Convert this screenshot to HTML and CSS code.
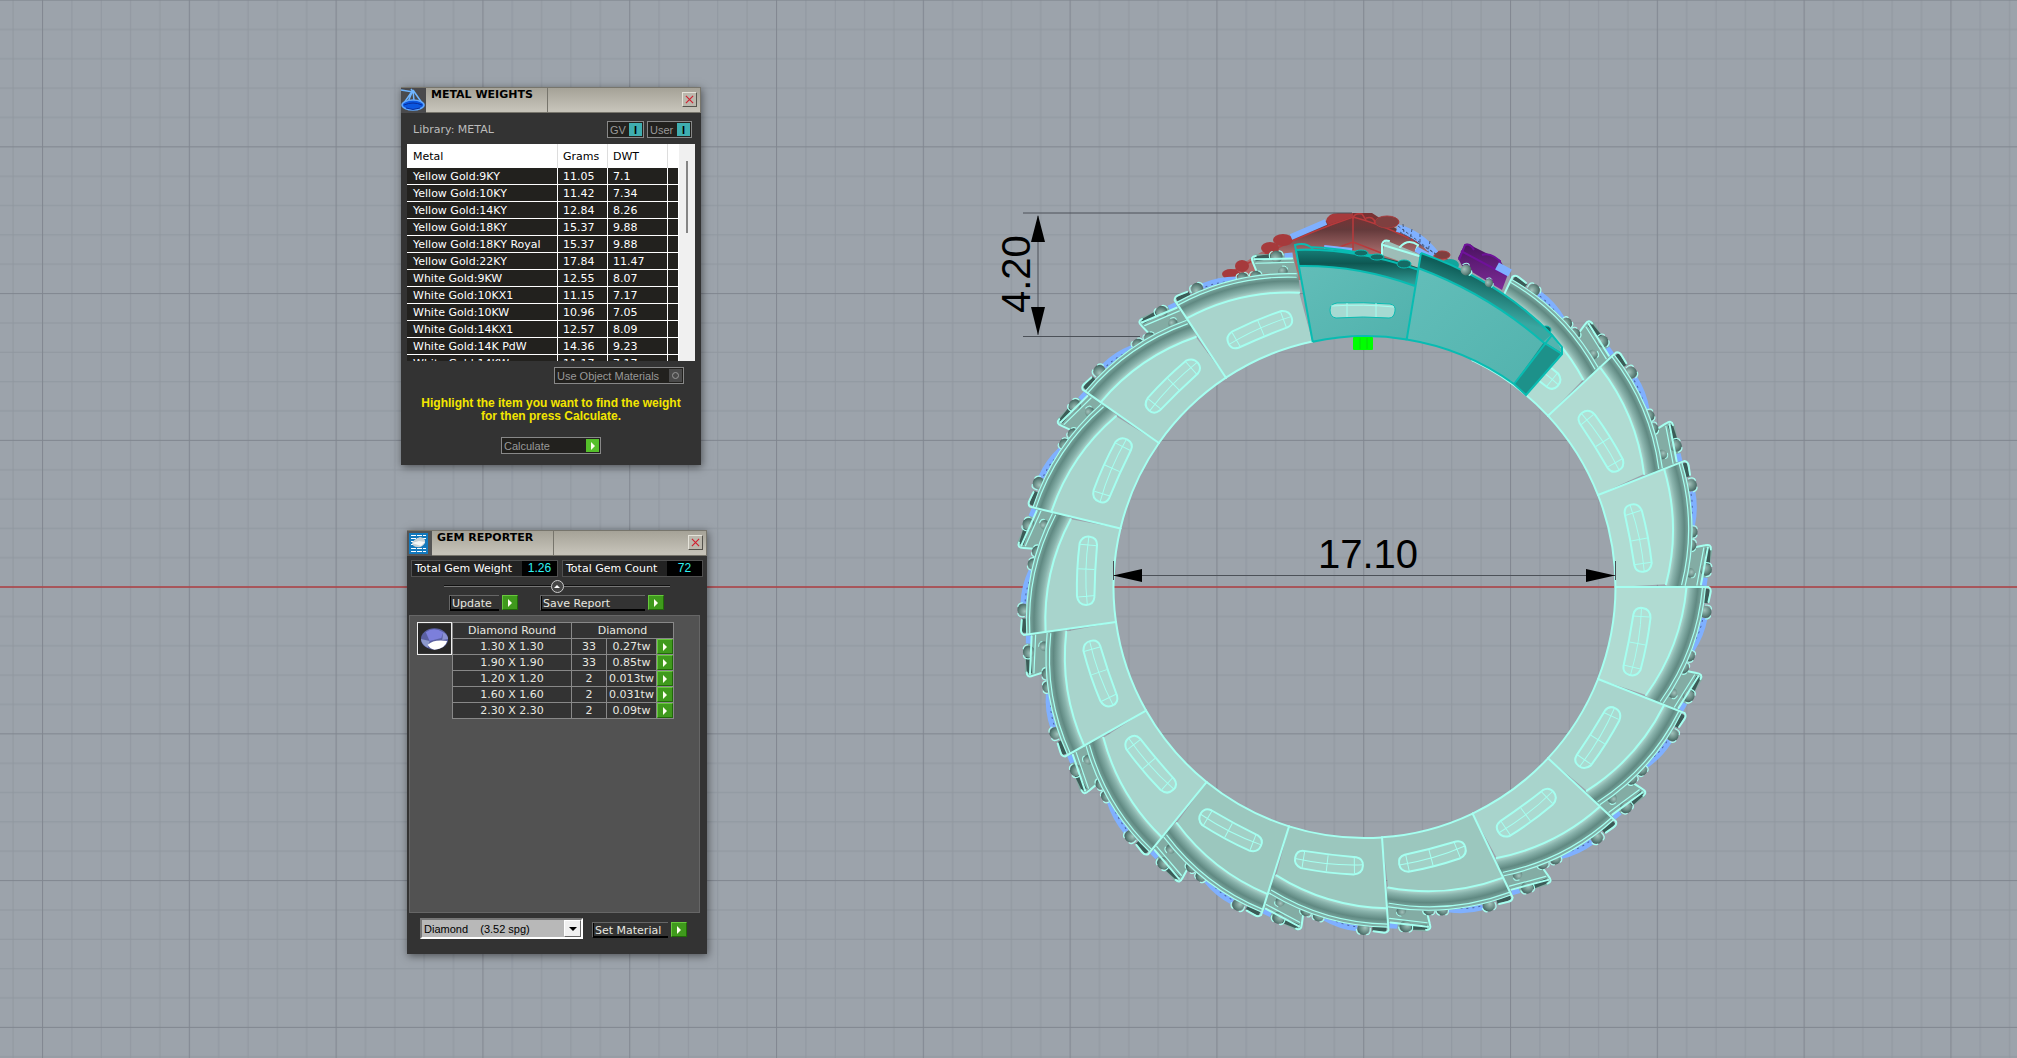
FILE: index.html
```html
<!DOCTYPE html>
<html lang="en">
<head>
    <meta charset="UTF-8">
    <meta name="viewport" content="width=device-width, initial-scale=1.0">
    <title>Ring Viewport</title>
    <link rel="stylesheet" href="styles.css">
</head>
<body>
    <main class="viewport">
        <svg class="scene" viewBox="0 0 2017 1058" preserveAspectRatio="xMinYMin slice">
            <defs>
                <pattern id="grid" x="42" y="-0.4" width="146.8" height="146.75" patternUnits="userSpaceOnUse">
                    <path class="grid-minor" d="M29.9 0V147M59.2 0V147M88.6 0V147M117.9 0V147M0 29.9H147M0 59.2H147M0 88.6H147M0 117.9H147"/>
                    <path class="grid-major" d="M.6 0V147M0 .6H147"/>
                </pattern>
                <radialGradient id="flange" gradientUnits="userSpaceOnUse" cx="106.7" cy="-19" r="237">
                    <stop offset=".911" stop-color="#b4dad2"/>
                    <stop offset=".93" stop-color="#8bb5ae"/>
                    <stop offset=".96" stop-color="#608982"/>
                    <stop offset=".985" stop-color="#82aea6"/>
                </radialGradient>
                <radialGradient id="beadFill" cx=".4" cy=".35" r=".7">
                    <stop offset="0" stop-color="#a3c2bc"/>
                    <stop offset=".6" stop-color="#688c85"/>
                    <stop offset="1" stop-color="#3f605b"/>
                </radialGradient>
                <linearGradient id="redFill" x1="0" y1="0" x2="0" y2="1">
                    <stop offset="0" stop-color="#7c3133"/>
                    <stop offset=".25" stop-color="#643a3b"/>
                    <stop offset=".6" stop-color="#a86c6c"/>
                    <stop offset="1" stop-color="#b86a6a"/>
                </linearGradient>
                <linearGradient id="tealTop" x1="0" y1="0" x2="0" y2="1">
                    <stop offset="0" stop-color="#16807a"/>
                    <stop offset=".4" stop-color="#0e5752"/>
                    <stop offset="1" stop-color="#37a59f"/>
                </linearGradient>
                <linearGradient id="tealSlope" x1=".6" y1=".3" x2=".45" y2=".65">
                    <stop offset="0" stop-color="#0f5f5a"/>
                    <stop offset="1" stop-color="#3aa7a1"/>
                </linearGradient>
                <linearGradient id="tealBody" x1="0" y1="0" x2="1" y2="1">
                    <stop offset="0" stop-color="#64bfba"/>
                    <stop offset="1" stop-color="#50b1ac"/>
                </linearGradient>
                <linearGradient id="purpleFill" x1="0" y1="0" x2="0" y2="1">
                    <stop offset="0" stop-color="#4a1260"/>
                    <stop offset="1" stop-color="#7d2c97"/>
                </linearGradient>

                <g id="bead">
                    <circle r="6" fill="url(#beadFill)"/>
                    <path class="edge thin" d="M0 -7Q6 -7 6 -3M5 4Q4 7 0 7"/>
                </g>

                <!-- one link, drawn round the ring centre, high end at 0deg -->
                <g id="link">
                    <path fill="#83aca4" d="M320 84L334 86L338 92L318 124L298 117Z"/>
                    <path class="groove" d="M334 90L327 105"/>
                    <path class="gem" d="M320 116L316 123"/>
                    <use href="#bead" transform="translate(324 109) rotate(20)"/>
                    <use href="#bead" transform="translate(308 106) rotate(120) scale(.8)"/>
                    <path class="edge" d="M322 84L332 86Q339 87 336 92M334 89L314 121"/>
                    <path class="edge thin" d="M330 88L310 120"/>
                    <path class="gem" d="M340 31Q337 48 327 63"/>
                    <path class="gem-dots" d="M338 33Q335 48 326 61"/>
                    <use href="#bead" transform="translate(341 25)"/>
                    <use href="#bead" transform="translate(325 69) rotate(15) scale(.9)"/>
                    <use href="#bead" transform="translate(319 81) rotate(20) scale(.9)"/>
                    <path class="groove" d="M343 2L341 16"/>
                    <path fill="url(#flange)" d="M322 0H341A236 236 0 0 1 299 118L281 109A216 216 0 0 0 322 0Z"/>
                    <path fill="currentColor" d="M251 0H322A216 216 0 0 1 281.5 108L233.5 92A251 251 0 0 0 251 0Z"/>
                    <path class="edge" d="M322 0A216 216 0 0 1 281.5 108"/>
                    <path class="edge thin" d="M338 0A231 231 0 0 1 296 114M341 0A235 235 0 0 1 299 116"/>
                    <path class="edge" d="M251 0H344Q347 2 346 6L344 15"/>
                    <path class="edge" d="M251 0A251 251 0 0 1 233.5 92"/>
                    <path class="slot" d="M269 27Q271 20 278 21Q286 22 286 31Q283 57 276 83Q272 90 265 88Q258 86 259 79Q265 53 269 27Z"/>
                    <path class="slot-grid" d="M277 21Q276 54 266 88M268 29L285 30M265 55L281 58M259 78L276 82"/>
                </g>
            </defs>

            <rect class="ground" width="100%" height="100%"/>
            <rect width="100%" height="100%" fill="url(#grid)"/>
            <path class="axis" d="M0 587H2017"/>

            <!-- red head -->
            <g class="red">
                <path d="M1223 277Q1275 240 1326 221L1353 213H1372L1392 226L1450 262L1418 280H1232Z" fill="url(#redFill)"/>
                <path class="red-edge" d="M1224 277Q1285 240 1353 217Q1396 228 1448 260M1353 217V250M1320 254L1353 242L1384 254"/>
                <path d="M1326 221Q1328 213 1338 213H1353V217L1328 225Z"/>
                <ellipse cx="1283" cy="240" rx="10" ry="6"/>
                <ellipse cx="1270" cy="248" rx="9" ry="6"/>
                <ellipse cx="1242" cy="266" rx="7" ry="6"/>
                <ellipse cx="1231" cy="274" rx="9" ry="5"/>
                <ellipse class="red-dark" cx="1387" cy="222" rx="12" ry="6"/>
                <ellipse class="red-dark" cx="1442" cy="255" rx="8" ry="4"/>
                <path class="red-edge" d="M1353 219Q1353 213 1362 214L1366 220M1366 218Q1374 216 1375 223"/>
                <path class="gem" d="M1291 237L1326 222"/>
                <path class="gem wide" d="M1397 228Q1420 234 1435 254"/>
                <path class="mesh" d="M1398 226L1438 256M1400 232L1436 254M1403 224L1404 234M1412 229L1410 240M1420 234L1420 246M1430 241L1428 252"/>
            </g>
            <path class="purple" d="M1458 258L1465 244Q1470 243 1474 247L1500 260L1508 274L1502 290L1462 266Z"/>
            <path class="purple-edge" d="M1459 260L1465 245Q1470 243 1474 250M1461 251L1506 275M1482 255Q1490 252 1500 261V266"/>
            <path class="gem wide" d="M1497 266L1510 273"/>

            <g transform="translate(1364.5 587)">
                <use href="#link" class="lit" transform="rotate(-64.5)"/>
                <use href="#link" class="lit" transform="rotate(-43)"/>
                <use href="#link" class="lit" transform="rotate(-21.5)"/>
                <use href="#link" class="lit"/>
                <use href="#link" class="mid" transform="rotate(21.5)"/>
                <use href="#link" class="mid" transform="rotate(43)"/>
                <use href="#link" class="dim" transform="rotate(64.5)"/>
                <use href="#link" class="dim" transform="rotate(86)"/>
                <use href="#link" class="dim" transform="rotate(107.5)"/>
                <use href="#link" class="mid" transform="rotate(129)"/>
                <use href="#link" class="mid" transform="rotate(150.5)"/>
                <use href="#link" class="mid" transform="rotate(172)"/>
                <use href="#link" class="mid" transform="rotate(193.5)"/>
                <use href="#link" class="mid" transform="rotate(215)"/>
                <use href="#link" class="mid" transform="rotate(236.5)"/>
            </g>

            <!-- bracket between the red head and the teal links -->
            <path d="M1382 255L1385 240L1419 254V268Z" fill="#9dbdb7"/>
            <path class="edge" d="M1382 255V244Q1384 239 1389 241M1383 245L1419 256M1400 247Q1408 238 1418 245L1416 250"/>
            <path class="gem" d="M1324 248L1352 251M1416 249L1432 258"/>

            <g class="teal">
                <path d="M1295 249Q1356 246 1419 270L1406.7 339.5A251 251 0 0 0 1312.7 341.7Z" fill="url(#tealBody)"/>
                <path d="M1295 249Q1356 246 1419 268L1415 286Q1358 265 1299 266Z" fill="url(#tealTop)"/>
                <path class="teal-edge" d="M1312.7 341.7L1295 245Q1306 242 1313 249M1295 250Q1356 248 1419 270M1299 266Q1358 265 1415 286M1312.7 341.7A251 251 0 0 1 1406.7 339.5M1310 247Q1340 248 1375 256"/>
                <path class="teal-slot" d="M1337 303Q1364 302 1390 304Q1396 305 1395 311Q1394 318 1389 318Q1364 316 1336 318Q1330 317 1330 310Q1330 304 1337 303Z"/>
                <path class="slot-grid" d="M1331 306Q1364 304 1394 307M1347 303V317M1376 303V317"/>
                <ellipse cx="1450" cy="265" rx="9" ry="6"/>
                <ellipse class="teal-bead" cx="1546" cy="330" rx="5" ry="4"/>
                <path d="M1421 253Q1500 281 1552 334L1562 350L1525 395L1514 384A251 251 0 0 0 1406.7 339.5Z" fill="url(#tealBody)"/>
                <path d="M1421 253Q1500 281 1552 334L1543 342Q1488 294 1418 268Z" fill="url(#tealSlope)"/>
                <path class="teal-cap" d="M1544 342L1562 353L1526 395L1514 384Z"/>
                <path class="teal-edge" d="M1421 253L1406.7 339.5A251 251 0 0 1 1514 384L1526 395L1562 354V347L1552 335Q1500 281 1421 253M1514 384L1552 335M1418 268Q1488 294 1543 342L1562 354"/>
                <ellipse class="teal-bead" cx="1361" cy="253" rx="7" ry="3"/>
                <ellipse class="teal-bead" cx="1377" cy="257" rx="7" ry="3"/>
                <ellipse class="teal-bead" cx="1404" cy="264" rx="7" ry="4"/>
            </g>
            <use href="#bead" transform="translate(1466 270) rotate(-30) scale(.9)"/>
            <use href="#bead" transform="translate(1489 283) rotate(-30) scale(.7)"/>

            <rect class="origin" x="1353" y="337" width="20" height="13" rx="1"/>
            <path class="origin-lines" d="M1360 338V349M1367 338V349"/>

            <!-- dimensions -->
            <path class="dim-line" d="M1023 213H1352M1023 336.500H1140M1038 216V335M1113 575.500H1615M1113.500 561V580M1615.500 561V580"/>
            <path class="dim-arrow" d="M1038 215L1045 242H1031ZM1038 335L1031 307H1045ZM1113 575.500L1142 569V582ZM1615 575.500L1586 569V582Z"/>
            <text class="dim-text" x="1318" y="568">17.10</text>
            <text class="dim-text" transform="translate(1030 313) rotate(-90)">4.20</text>
        </svg>

        <section class="window metal-window">
            <header class="titlebar">
                <svg class="app-icon" viewBox="0 0 25 25">
                    <rect width="25" height="25" fill="#4a4a4c"/>
                    <path d="M0 2L12 4L10 1M12 2L3 15M12 2L21 15M12 2L13 13M12 2L7 14" fill="none" stroke="#6fb5ff" stroke-width="1.500"/>
                    <ellipse cx="12" cy="17" rx="11" ry="5" fill="#0b57e0" stroke="#62a8ff" stroke-width="1.500"/>
                    <path d="M3 17Q12 13 21 17M5 20Q12 23 19 20" fill="none" stroke="#0a2d9a"/>
                </svg>
                <h2>METAL WEIGHTS</h2>
                <button class="close" aria-label="Close"><svg viewBox="0 0 10 10"><path d="M1 1L9 9M9 1L1 9"/></svg></button>
            </header>
            <div class="library">
                <span>Library: METAL</span>
                <button class="flat toggle">GV <i>I</i></button>
                <button class="flat toggle user">User <i>I</i></button>
            </div>
            <div class="metal-list">
                <table class="metals">
                    <colgroup><col class="c-metal"><col class="c-grams"><col class="c-dwt"><col></colgroup>
                    <thead>
                        <tr><th>Metal</th><th>Grams</th><th>DWT</th><th></th></tr>
                    </thead>
                    <tbody>
                        <tr><td>Yellow Gold:9KY</td><td>11.05</td><td>7.1</td><td></td></tr>
                        <tr><td>Yellow Gold:10KY</td><td>11.42</td><td>7.34</td><td></td></tr>
                        <tr><td>Yellow Gold:14KY</td><td>12.84</td><td>8.26</td><td></td></tr>
                        <tr><td>Yellow Gold:18KY</td><td>15.37</td><td>9.88</td><td></td></tr>
                        <tr><td>Yellow Gold:18KY Royal</td><td>15.37</td><td>9.88</td><td></td></tr>
                        <tr><td>Yellow Gold:22KY</td><td>17.84</td><td>11.47</td><td></td></tr>
                        <tr><td>White Gold:9KW</td><td>12.55</td><td>8.07</td><td></td></tr>
                        <tr><td>White Gold:10KX1</td><td>11.15</td><td>7.17</td><td></td></tr>
                        <tr><td>White Gold:10KW</td><td>10.96</td><td>7.05</td><td></td></tr>
                        <tr><td>White Gold:14KX1</td><td>12.57</td><td>8.09</td><td></td></tr>
                        <tr><td>White Gold:14K PdW</td><td>14.36</td><td>9.23</td><td></td></tr>
                        <tr><td>White Gold:14KW</td><td>11.17</td><td>7.17</td><td></td></tr>
                    </tbody>
                </table>
                <div class="scroll"><div class="thumb"></div></div>
            </div>
            <button class="flat materials">Use Object Materials <i><b></b></i></button>
            <p class="hint">Highlight the item you want to find the weight<br>for then press Calculate.</p>
            <button class="flat calculate">Calculate <i></i></button>
        </section>

        <section class="window gem-window">
            <header class="titlebar">
                <svg class="app-icon" viewBox="0 0 25 25">
                    <rect width="25" height="25" fill="#555"/>
                    <rect x="2" y="2" width="19" height="21" fill="#1379bd"/>
                    <path d="M4 4.500H19M4 7.500H19M4 17.500H19M4 20.500H19M4 10.500H7M4 13.500H7" stroke="#fff" stroke-dasharray="5 1"/>
                    <path d="M5 12Q7 8 13 6Q19 7 18 12Q15 17 10 16Q6 16 5 12Z" fill="#c9d3d6"/>
                    <path d="M5 12L12 10L18 11L14 15Z" fill="#f4f7f7"/>
                </svg>
                <h2>GEM REPORTER</h2>
                <button class="close" aria-label="Close"><svg viewBox="0 0 10 10"><path d="M1 1L9 9M9 1L1 9"/></svg></button>
            </header>
            <div class="totals">
                <div class="total weight">Total Gem Weight <output>1.26</output></div>
                <div class="total count">Total Gem Count <output>72</output></div>
            </div>
            <div class="splitter"><button class="knob" aria-label="Collapse"></button></div>
            <div class="actions">
                <label class="well update" for="update">Update</label>
                <button class="go" id="update"></button>
                <label class="well save" for="save">Save Report</label>
                <button class="go" id="save"></button>
            </div>
            <div class="report">
                <svg class="gem-thumb" viewBox="0 0 34 31">
                    <rect width="34" height="31" fill="#282828"/>
                    <ellipse cx="17" cy="16" rx="14" ry="11" fill="#5a60a2"/>
                    <path d="M8 9Q16 3 26 9L24 15L12 18Z" fill="#7c7fdb"/>
                    <path d="M3 16L12 18L10 25Q4 22 3 16Z" fill="#8d99cc"/>
                    <path d="M10 22Q16 16 30 18Q28 26 17 27Q12 26 10 22Z" fill="#fff"/>
                    <path d="M26 9Q31 12 31 16L25 17Z" fill="#8a90d0"/>
                </svg>
                <table class="gems">
                    <colgroup><col class="c-size"><col class="c-qty"><col class="c-tw"><col class="c-go"></colgroup>
                    <thead>
                        <tr><th>Diamond Round</th><th colspan="3">Diamond</th></tr>
                    </thead>
                    <tbody>
                        <tr><td>1.30 X 1.30</td><td>33</td><td>0.27tw</td><td><button class="go" aria-label="Select 1.30"></button></td></tr>
                        <tr><td>1.90 X 1.90</td><td>33</td><td>0.85tw</td><td><button class="go" aria-label="Select 1.90"></button></td></tr>
                        <tr><td>1.20 X 1.20</td><td>2</td><td>0.013tw</td><td><button class="go" aria-label="Select 1.20"></button></td></tr>
                        <tr><td>1.60 X 1.60</td><td>2</td><td>0.031tw</td><td><button class="go" aria-label="Select 1.60"></button></td></tr>
                        <tr><td>2.30 X 2.30</td><td>2</td><td>0.09tw</td><td><button class="go" aria-label="Select 2.30"></button></td></tr>
                    </tbody>
                </table>
            </div>
            <footer class="material-bar">
                <div class="picker">
                    <select aria-label="Material"><option>Diamond &nbsp;&nbsp; (3.52 spg)</option></select>
                    <span class="drop"></span>
                </div>
                <label class="well" for="setMaterial">Set Material</label>
                <button class="go" id="setMaterial"></button>
            </footer>
        </section>
    </main>
</body>
</html>
```
FILE: styles.css
```css
* {
    box-sizing: border-box;
}
body {
    margin: 0;
    background: #9ca3ab;
    font-family: Verdana, "DejaVu Sans", sans-serif;
    font-size: 11px;
    color: #e8e8e0;
}
.viewport {
    position: relative;
    min-height: 100vh;
    overflow: hidden;
}
.scene {
    display: block;
    width: 100%;
    height: 100vh;
}
button {
    font: inherit;
    padding: 0;
}

/* scene */
.ground { fill: #9ca3ab; }
.grid-minor { stroke: #90979f; stroke-width: 1; }
.grid-major { stroke: #80868f; stroke-width: 1; }
.axis { stroke: #b04044; stroke-width: 1.5; }
.edge { fill: none; stroke: #a5fff0; stroke-width: 2; stroke-linecap: round; }
.edge.thin { stroke-width: 1.2; }
.groove { fill: none; stroke: #3c5b57; stroke-width: 5; }
.gem { fill: none; stroke: #7fb0ff; stroke-width: 6; }
.gem.wide { stroke-width: 8; }
.gem-dots { fill: none; stroke: #4a669c; stroke-width: 1; stroke-dasharray: 2 4; }
.mesh { fill: none; stroke: #47597c; stroke-width: 1; stroke-dasharray: 3 2; }
.slot { fill: #b4e3da; fill-opacity: 0.3; stroke: #a5fff0; stroke-width: 2; }
.slot-grid { fill: none; stroke: #a5fff0; stroke-width: 1; }
.lit { color: #b0dbd2; }
.mid { color: #a8d4cc; }
.dim { color: #9bc7be; }
.red { fill: #a63a3c; }
.red-edge { fill: none; stroke: #b83a3c; stroke-width: 1.5; }
.red-dark { fill: #7f3f3f; stroke: #a63a3c; }
.purple { fill: url(#purpleFill); }
.purple-edge { fill: none; stroke: #6f129a; stroke-width: 2; }
.teal { fill: #12a59d; }
.teal-edge { fill: none; stroke: #08bcb2; stroke-width: 2; }
.teal-cap { fill: #1d918a; }
.teal-bead { fill: #156b65; stroke: #08bcb2; }
.teal-slot { fill: #a6dad2; stroke: #08bcb2; }
.origin { fill: #00ff00; }
.origin-lines { stroke: #0cd80c; }
.dim-line { fill: none; stroke: #4c5158; stroke-width: 1; }
.dim-arrow { fill: #000; }
.dim-text { font: 40px "Liberation Sans", Arial, sans-serif; fill: #000; }

/* windows */
.window {
    position: absolute;
    width: 300px;
    background: #333;
    box-shadow: 1px 2px 8px rgba(0, 0, 0, 0.5);
}
.metal-window {
    left: 401px;
    top: 87px;
    height: 378px;
}
.gem-window {
    left: 407px;
    top: 530px;
    height: 424px;
}
.titlebar {
    display: flex;
    height: 26px;
    border: solid #77756c;
    border-width: 1px 1px 1px 0;
    background: linear-gradient(#a5a297, #c5c2b8 90%);
}
.app-icon {
    width: 25px;
    height: 25px;
}
.titlebar h2 {
    width: 122px;
    margin: 0 auto 0 0;
    padding-left: 5px;
    border-right: 1px solid #77756c;
    font-size: 11px;
    line-height: 14px;
    color: #000;
}
.close {
    width: 15px;
    height: 15px;
    margin: 4px 3px 0 0;
    border: 1px solid;
    border-color: #e5e3da #55534d #55534d #e5e3da;
    background: #bbb8ad;
}
.close svg {
    display: block;
    width: 9px;
    margin: 0 auto;
    stroke: #d02030;
    stroke-width: 1.3;
}

/* metal weights */
.library {
    display: flex;
    align-items: center;
    gap: 3px;
    height: 31px;
    padding: 2px 9px 0 12px;
    color: #bbb;
}
.library span {
    margin-right: auto;
}
.flat {
    display: flex;
    align-items: center;
    justify-content: space-between;
    height: 17px;
    padding: 0 1px 0 2px;
    border: 1px solid #888;
    background: #22211e;
    color: #999;
    font: 11px "Liberation Sans", Arial, sans-serif;
}
.flat i {
    display: flex;
    align-items: center;
    justify-content: center;
    width: 13px;
    height: 13px;
    font-style: normal;
}
.toggle {
    width: 37px;
}
.toggle.user {
    width: 45px;
}
.toggle i {
    background: #3faeb0;
    color: #000;
    font-weight: bold;
}
.metal-list {
    display: flex;
    align-items: flex-start;
    width: 288px;
    height: 217px;
    margin-left: 6px;
    overflow: hidden;
}
table {
    border-collapse: separate;
    border-spacing: 0;
    table-layout: fixed;
}
.metals {
    width: 272px;
    border-right: 1px solid #fff;
}
.c-metal { width: 151px; }
.c-grams { width: 50px; }
.c-dwt { width: 60px; }
.metals th,
.metals td {
    padding: 0 0 0 6px;
    text-align: left;
    font-weight: normal;
    white-space: nowrap;
}
.metals th + th,
.metals td + td {
    padding-left: 5px;
}
.metals th {
    height: 24px;
    border-right: 1px solid #ddd;
    background: #fff;
    color: #000;
}
.metals td {
    height: 17px;
    padding-top: 2px;
    border-right: 1px solid #fff;
    border-bottom: 1px solid #fff;
    background: #22211e;
    color: #fff;
    line-height: 14px;
}
.metals th:last-child,
.metals td:last-child {
    border-right: 0;
}
.scroll {
    flex: 1;
    align-self: stretch;
    background: #f0f0f0;
}
.thumb {
    width: 2px;
    height: 72px;
    margin: 17px 0 0 7px;
    background: #858585;
}
.materials {
    width: 130px;
    margin: 6px 17px 0 auto;
}
.materials i {
    background: #4a4a4a;
}
.materials b {
    width: 7px;
    height: 7px;
    border: 1px solid #999;
    border-radius: 50%;
}
.hint {
    margin: 13px 0 14px;
    color: #f3e600;
    font: bold 12px/13px "Liberation Sans", Arial, sans-serif;
    text-align: center;
}
.calculate {
    width: 100px;
    margin: 0 auto;
}
.calculate i {
    background: #55c02a;
}
.calculate i::before,
.go::before {
    content: "";
    border: solid transparent;
    border-width: 4px 0 4px 4px;
    border-left-color: #fffff0;
}

/* gem reporter */
.totals {
    display: flex;
    gap: 4px;
    padding: 4px 4px 0;
}
.total {
    display: flex;
    justify-content: space-between;
    height: 17px;
    padding-left: 3px;
    border: 1px solid #505050;
    background: #222;
    color: #fff;
    line-height: 15px;
}
.weight {
    width: 147px;
}
.count {
    width: 141px;
}
.total output {
    width: 35px;
    background: #000;
    color: #2ff3f3;
    font: 12px/15px "Liberation Sans", Arial, sans-serif;
    text-align: center;
}
.splitter {
    display: flex;
    align-items: center;
    justify-content: center;
    height: 18px;
    margin: 0 37px;
    background: linear-gradient(#111, #111) 0 8px / 100% 1px no-repeat, linear-gradient(#777, #777) 0 9px / 100% 1px no-repeat;
}
.knob {
    display: flex;
    align-items: center;
    justify-content: center;
    width: 13px;
    height: 13px;
    border: 1px solid #ccc;
    border-radius: 50%;
    background: #444;
}
.knob::before {
    content: "";
    border: solid transparent;
    border-width: 0 3px 3px;
    border-bottom-color: #fff;
}
.actions {
    display: flex;
    gap: 3px;
    padding-left: 42px;
}
.well {
    height: 16px;
    padding-left: 2px;
    border: solid;
    border-width: 1px 0 1px 1px;
    border-color: #666 #666 #000 #666;
    box-shadow: inset 1px 0 #000, inset 0 -1px #000;
    line-height: 16px;
    white-space: nowrap;
}
.update {
    width: 50px;
}
.save {
    width: 105px;
    margin-left: 19px;
}
.go {
    display: flex;
    align-items: center;
    justify-content: center;
    width: 16px;
    height: 15px;
    border: 1px solid;
    border-color: #68c83e #206a08 #206a08 #68c83e;
    background: #3f9a1c;
}
.report {
    display: flex;
    align-items: flex-start;
    width: 291px;
    height: 298px;
    margin: 4px 0 0 2px;
    padding: 6px 0 0 7px;
    border: 1px solid #666;
    background: #525252;
}
.gem-thumb {
    width: 35px;
    height: 33px;
    border: 1px solid #eee;
}
.gems {
    width: 222px;
    border: solid #888;
    border-width: 1px 0 0 1px;
    background: #333;
}
.c-size { width: 119px; }
.c-qty { width: 35px; }
.c-tw { width: 50px; }
.c-go { width: 17px; }
.gems th,
.gems td {
    height: 16px;
    padding: 0;
    border: solid #888;
    border-width: 0 1px 1px 0;
    font-weight: normal;
    line-height: 15px;
    text-align: center;
    white-space: nowrap;
}
.material-bar {
    display: flex;
    align-items: center;
    padding: 5px 0 0 13px;
}
.material-bar .well {
    width: 76px;
    margin: 2px 3px 0 9px;
}
.material-bar .go {
    margin-top: 2px;
}
.picker {
    position: relative;
    width: 163px;
    height: 21px;
}
.picker select {
    width: 100%;
    height: 100%;
    padding-left: 2px;
    appearance: none;
    border: 2px solid;
    border-color: #777 #fff #fff #777;
    border-radius: 0;
    background: #b8b8b8;
    color: #000;
    font: 11px "Liberation Sans", Arial, sans-serif;
}
/* button face over the right end of the select */
.drop {
    position: absolute;
    top: 2px;
    right: 2px;
    display: flex;
    align-items: center;
    justify-content: center;
    width: 17px;
    height: 17px;
    border: 1px solid;
    border-color: #fff #666 #666 #fff;
    background: #f0f0f0;
    pointer-events: none;
}
.drop::before {
    content: "";
    border: solid transparent;
    border-width: 4px 4px 0;
    border-top-color: #000;
}
```
